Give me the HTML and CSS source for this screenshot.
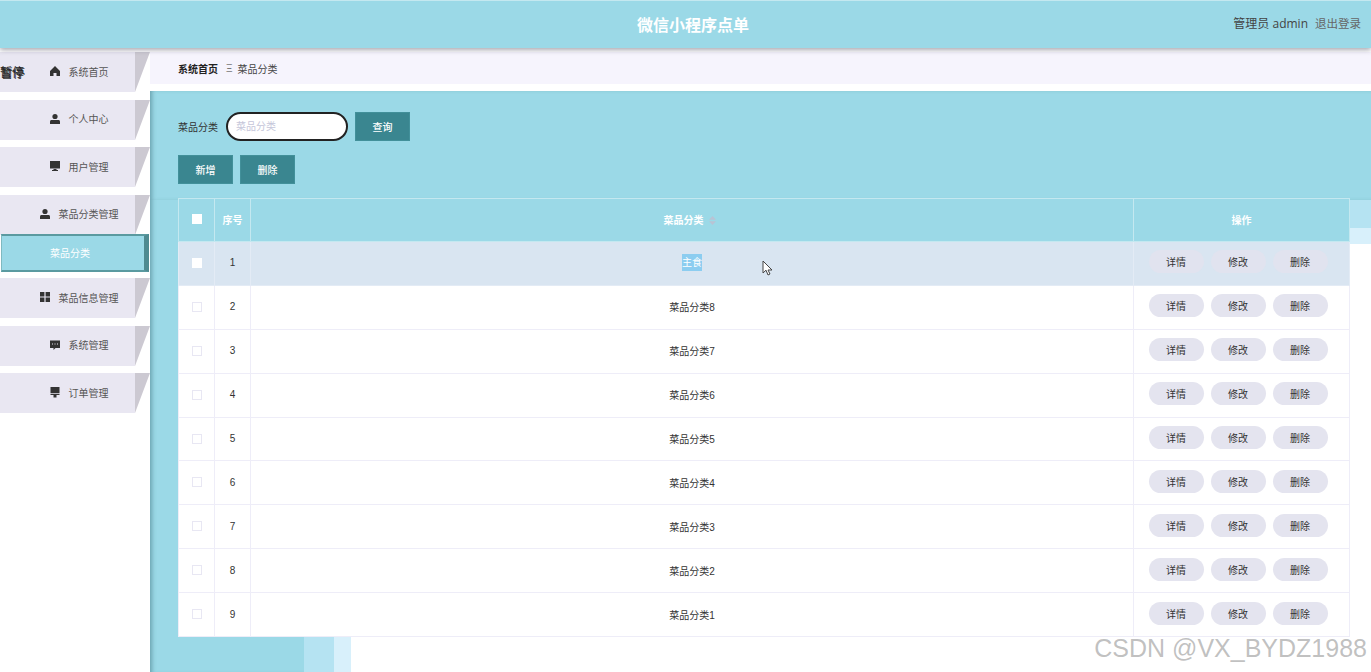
FILE: index.html
```html
<!DOCTYPE html>
<html lang="zh-CN">
	<head>
		<meta charset="UTF-8" />
		<meta name="viewport" content="width=device-width, initial-scale=1.0" />
		<title>微信小程序点单</title>
		<link rel="stylesheet" href="styles.css">
	</head>
	<body>
		<header class="top-bar">
			<div class="top-title">微信小程序点单</div>
			<div class="top-user">
				<span class="top-admin">管理员 admin</span>
				<span class="top-logout">退出登录</span>
			</div>
		</header>
		<div class="layout">
			<aside class="side">
				<span class="side-stray">暂停</span>
				<div class="menu-item">
					<svg class="menu-icon" viewBox="0 0 12 12"><path d="M6 1 1 6v5h3.500V8h3v3H11V6z" /></svg>
					<span>系统首页</span>
				</div>
				<div class="menu-item">
					<svg class="menu-icon" viewBox="0 0 12 12"><circle cx="6" cy="3.500" r="2.600" /><path d="M1 11V8.600C1 7.400 2 7 3 7h6c1 0 2 .4 2 1.600V11z" /></svg>
					<span>个人中心</span>
				</div>
				<div class="menu-item">
					<svg class="menu-icon" viewBox="0 0 12 12"><path d="M1 1h10v7.500H1zM4.500 9h3v1H9v1H3v-1h1.500z" /></svg>
					<span>用户管理</span>
				</div>
				<div class="menu-item">
					<svg class="menu-icon" viewBox="0 0 12 12"><circle cx="6" cy="3.500" r="2.600" /><path d="M1 11V8.600C1 7.400 2 7 3 7h6c1 0 2 .4 2 1.600V11z" /></svg>
					<span>菜品分类管理</span>
				</div>
				<div class="menu-sub">菜品分类</div>
				<div class="menu-item">
					<svg class="menu-icon" viewBox="0 0 12 12"><path d="M1 1h4.400v4.400H1zM6.600 1H11v4.400H6.600zM1 6.600h4.400V11H1zM6.600 6.600H11V11H6.600z" /></svg>
					<span>菜品信息管理</span>
				</div>
				<div class="menu-item">
					<svg class="menu-icon" viewBox="0 0 12 12"><path fill-rule="evenodd" d="M1 1.500h10v7.500H6.500L4.500 11V9H1zM3 4.600v1h1v-1zm2.500 0v1h1v-1zm2.500 0v1h1v-1z" /></svg>
					<span>系统管理</span>
				</div>
				<div class="menu-item">
					<svg class="menu-icon" viewBox="0 0 12 12"><path d="M1.500 1h9v6h-9zM1.500 7.800h9V9h-3v2.500h-3V9h-3z" /></svg>
					<span>订单管理</span>
				</div>
			</aside>
			<main class="content">
				<nav class="crumb">
					<b>系统首页</b>
					<span class="crumb-sep">Ξ</span>
					<span>菜品分类</span>
				</nav>
				<section class="panel">
					<div class="panel-back panel-back-2"></div>
					<div class="panel-back panel-back-1"></div>
					<div class="panel-back panel-back-0"></div>
					<div class="panel-body">
						<form class="search-row">
							<label class="search-label">菜品分类</label>
							<input class="search-input" placeholder="菜品分类" />
							<button class="btn" type="button">查询</button>
						</form>
						<div class="action-row">
							<button class="btn" type="button">新增</button>
							<button class="btn" type="button">删除</button>
						</div>
						<table class="grid">
							<thead>
								<tr>
									<th class="col-check"><i class="check check-head"></i></th>
									<th class="col-num">序号</th>
									<th>菜品分类<svg class="sort" viewBox="0 0 7 9"><path d="M3.500 0 7 3.700H0zM0 5.300h7L3.500 9z" /></svg></th>
									<th class="col-ops">操作</th>
								</tr>
							</thead>
							<tbody id="rows">
								<tr class="row-hover">
									<td><i class="check"></i></td>
									<td>1</td>
									<td><span class="picked">主食</span></td>
									<td><div class="ops"><button class="pill">详情</button><button class="pill">修改</button><button class="pill">删除</button></div></td>
								</tr>
								<tr>
									<td><i class="check"></i></td>
									<td>2</td>
									<td>菜品分类8</td>
									<td><div class="ops"><button class="pill">详情</button><button class="pill">修改</button><button class="pill">删除</button></div></td>
								</tr>
								<tr>
									<td><i class="check"></i></td>
									<td>3</td>
									<td>菜品分类7</td>
									<td><div class="ops"><button class="pill">详情</button><button class="pill">修改</button><button class="pill">删除</button></div></td>
								</tr>
								<tr>
									<td><i class="check"></i></td>
									<td>4</td>
									<td>菜品分类6</td>
									<td><div class="ops"><button class="pill">详情</button><button class="pill">修改</button><button class="pill">删除</button></div></td>
								</tr>
								<tr>
									<td><i class="check"></i></td>
									<td>5</td>
									<td>菜品分类5</td>
									<td><div class="ops"><button class="pill">详情</button><button class="pill">修改</button><button class="pill">删除</button></div></td>
								</tr>
								<tr>
									<td><i class="check"></i></td>
									<td>6</td>
									<td>菜品分类4</td>
									<td><div class="ops"><button class="pill">详情</button><button class="pill">修改</button><button class="pill">删除</button></div></td>
								</tr>
								<tr>
									<td><i class="check"></i></td>
									<td>7</td>
									<td>菜品分类3</td>
									<td><div class="ops"><button class="pill">详情</button><button class="pill">修改</button><button class="pill">删除</button></div></td>
								</tr>
								<tr>
									<td><i class="check"></i></td>
									<td>8</td>
									<td>菜品分类2</td>
									<td><div class="ops"><button class="pill">详情</button><button class="pill">修改</button><button class="pill">删除</button></div></td>
								</tr>
								<tr>
									<td><i class="check"></i></td>
									<td>9</td>
									<td>菜品分类1</td>
									<td><div class="ops"><button class="pill">详情</button><button class="pill">修改</button><button class="pill">删除</button></div></td>
								</tr>
							</tbody>
						</table>
					</div>
				</section>
			</main>
		</div>
		<svg class="cursor" viewBox="0 0 11 16"><path d="M1 1v12l3-2.800L6 15l2-1-2-4h4z" /></svg>
		<div class="watermark">CSDN @VX_BYDZ1988</div>
	</body>
</html>
```

FILE: styles.css
```css
* {
	box-sizing: border-box;
}
html,
body {
	margin: 0;
	height: 100%;
	overflow: hidden;
}
body {
	position: relative;
	background: #fff;
	color: #333;
	font-family: "Liberation Sans", "Noto Sans CJK SC", sans-serif;
	font-size: 10px;
}
.top-bar {
	position: relative;
	z-index: 3;
	display: flex;
	justify-content: center;
	align-items: center;
	height: 48px;
	padding: 0 0 2px 15px;
	background: #9bd9e7;
	border-top: 1px solid #c4e8f0;
	box-shadow: 0 2px 5px rgba(60, 60, 80, 0.45);
}
.top-title {
	color: #fff;
	font-size: 16px;
	font-weight: 700;
}
.top-user {
	position: absolute;
	top: 14px;
	right: 10px;
	display: flex;
	gap: 7px;
	font-family: "Open Sans", "Noto Sans CJK SC", sans-serif;
	font-size: 12px;
	line-height: 18px;
}
.top-admin {
	color: #444;
}
.top-logout {
	color: #666;
	font-size: 11.5px;
}
.layout {
	display: flex;
	height: 624px;
}
.side {
	position: relative;
	flex: none;
	width: 150px;
	padding-top: 4px;
	overflow: hidden;
}
/* 겹쳐 보이는 글자 */
.side-stray {
	position: absolute;
	z-index: 1;
	top: 16px;
	left: 0;
	color: #222;
	font-size: 12px;
	line-height: 18px;
	white-space: nowrap;
	text-shadow: 1px 1px #333;
}
.menu-item {
	position: relative;
	display: flex;
	align-items: center;
	justify-content: center;
	gap: 8px;
	width: 135px;
	height: 40px;
	margin-bottom: 7.5px;
	padding: 0 0 2px 22px;
	background: #e9e7f2;
	color: #555;
}
.menu-item::after {
	content: "";
	position: absolute;
	top: 0;
	left: 135px;
	border-top: 40px solid #ccc9d2;
	border-right: 15px solid transparent;
}
.menu-icon {
	flex: none;
	width: 12px;
	height: 12px;
	fill: #333;
}
.menu-sub {
	position: relative;
	display: flex;
	align-items: center;
	justify-content: center;
	width: 148px;
	height: 38px;
	margin: -8.5px 0 6.5px 1px;
	padding: 0 6px 1px 0;
	background: #9bd9e7;
	border: 1px solid #5a9aa0;
	border-width: 2px 5px 2px 1px;
	border-left-color: #7fb9c0;
	border-right-color: #4f8a90;
	color: #fff;
}
.content {
	flex: 1;
	min-width: 0;
	padding-top: 4px;
}
.crumb {
	display: flex;
	align-items: center;
	gap: 7px;
	height: 32px;
	padding: 0 28px;
	background: #f6f4fd;
	color: #444;
}
.crumb b {
	color: #222;
}
.crumb-sep {
	margin: 0 -2px 0 1px;
	color: #777;
}
.panel {
	position: relative;
	height: 582px;
	margin-top: 7px;
}
.panel-back {
	position: absolute;
	top: 0;
	left: 0;
}
.panel-back-0 {
	width: 154px;
	height: 100%;
	background: #9bd9e7;
	box-shadow: inset 4px 0 4px -2px rgba(60, 110, 120, 0.5);
}
.panel-back-0::after {
	content: "";
	position: absolute;
	top: 0;
	left: 0;
	width: 1221px;
	height: 109px;
	background: #9bd9e7;
	box-shadow: inset 4px 0 4px -2px rgba(60, 110, 120, 0.5);
}
.panel-back-1 {
	width: 184px;
	height: 100%;
	background: #b5e3f2;
}
.panel-back-1::after {
	content: "";
	position: absolute;
	top: 0;
	left: 0;
	width: 1221px;
	height: 137px;
	background: #b5e3f2;
}
.panel-back-2 {
	width: 201px;
	height: 100%;
	background: #d8f0fb;
}
.panel-back-2::after {
	content: "";
	position: absolute;
	top: 0;
	left: 0;
	width: 1221px;
	height: 153px;
	background: #d8f0fb;
}
.panel-body {
	position: relative;
	padding: 21px 21px 0 28px;
}
.search-row {
	display: flex;
	align-items: center;
	height: 29px;
	margin: 0;
}
.search-label {
	margin-right: 8px;
	color: #333;
}
.search-input {
	width: 122px;
	height: 29px;
	margin-right: 7px;
	padding: 0 8px;
	border: 2px solid #222;
	border-radius: 15px;
	background: #fff;
	font: inherit;
	outline: none;
}
.search-input::placeholder {
	color: #c5c6da;
}
.btn {
	width: 55px;
	height: 29px;
	padding: 0;
	border: 1px solid #42909a;
	background: #3a8690;
	color: #fff;
	font: inherit;
	font-weight: 500;
}
.action-row {
	display: flex;
	gap: 7px;
	margin-top: 14px;
}
.grid {
	width: 1172px;
	margin-top: 14px;
	border-collapse: collapse;
	table-layout: fixed;
	background: #fff;
	text-align: center;
}
.grid th,
.grid td {
	padding: 0;
	border: 1px solid #eeedf8;
}
.grid th {
	height: 43px;
	padding-bottom: 2px;
	background: #9bd9e7;
	border-color: #c4e8f0;
	color: #fff;
	font-weight: 700;
}
.grid td {
	height: 43.9px;
	padding-bottom: 1px;
	color: #333;
}
.col-check,
.col-num {
	width: 36px;
}
.col-ops {
	width: 216px;
}
.row-hover td {
	background: #d9e5f1;
	border-color: #e3ebf5;
}
.check {
	display: block;
	width: 10px;
	height: 10px;
	margin: auto;
	background: #fff;
	border: 1px solid #e8e7f3;
}
.check-head {
	border-color: #fff;
}
.row-hover .check {
	border-color: #fff;
}
.sort {
	width: 7px;
	height: 9px;
	margin: 0 5px 0 5px;
	vertical-align: -1px;
	fill: #b9c3d4;
}
.picked {
	display: inline-block;
	background: #8ccdf0;
	color: #fff;
	line-height: 17px;
}
.ops {
	display: flex;
	justify-content: center;
	gap: 7px;
	padding: 0 7px 2px 0;
}
.pill {
	width: 55px;
	height: 23px;
	padding: 0;
	border: 0;
	border-radius: 12px;
	background: #e4e4ef;
	color: #333;
	font: inherit;
}
.row-hover .pill {
	background: #e1e3ef;
}
.cursor {
	position: absolute;
	top: 260px;
	left: 762px;
	width: 11px;
	height: 16px;
	fill: #fff;
	stroke: #444;
	stroke-width: 1;
}
.watermark {
	position: absolute;
	right: 4px;
	bottom: 9px;
	color: rgba(140, 140, 140, 0.55);
	font-size: 25px;
	line-height: 30px;
	white-space: nowrap;
}
```
